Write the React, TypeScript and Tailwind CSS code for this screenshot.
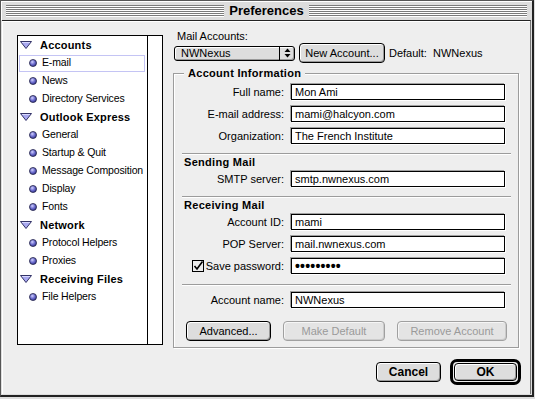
import React from 'react';

const sidebar = [
  { type: 'head', label: 'Accounts' },
  { type: 'item', label: 'E-mail', selected: true },
  { type: 'item', label: 'News' },
  { type: 'item', label: 'Directory Services' },
  { type: 'head', label: 'Outlook Express' },
  { type: 'item', label: 'General' },
  { type: 'item', label: 'Startup & Quit' },
  { type: 'item', label: 'Message Composition' },
  { type: 'item', label: 'Display' },
  { type: 'item', label: 'Fonts' },
  { type: 'head', label: 'Network' },
  { type: 'item', label: 'Protocol Helpers' },
  { type: 'item', label: 'Proxies' },
  { type: 'head', label: 'Receiving Files' },
  { type: 'item', label: 'File Helpers' },
];

function Triangle() {
  return (
    <svg width="12" height="8" viewBox="0 0 12 8" className="shrink-0">
      <polygon points="0.5,0.5 11.5,0.5 6,7.5" fill="#a8a8f0" stroke="#333366" strokeWidth="1" />
      <line x1="2" y1="1.5" x2="10" y2="1.5" stroke="#d8d8ff" />
    </svg>
  );
}

function Bullet() {
  return (
    <svg width="8" height="8" viewBox="0 0 8 8" className="shrink-0">
      <defs>
        <radialGradient id="bg" cx="0.4" cy="0.35" r="0.7">
          <stop offset="0" stopColor="#d0d0ff" />
          <stop offset="0.5" stopColor="#7070d0" />
          <stop offset="1" stopColor="#303090" />
        </radialGradient>
      </defs>
      <circle cx="4" cy="4" r="3.5" fill="url(#bg)" stroke="#222244" strokeWidth="0.8" />
    </svg>
  );
}

function Stripes({ className }: { className?: string }) {
  return (
    <div className={`flex flex-col ${className ?? ''}`}>
      {[0, 1, 2, 3, 4, 5].map((i) => (
        <div key={i} className="h-[2px] border-t border-[#7b7b7b] bg-white" />
      ))}
    </div>
  );
}

function Field({ label, value, checkbox, mask }: { label: string; value: string; checkbox?: boolean; mask?: boolean }) {
  return (
    <div className="flex items-center h-[16px]">
      <div className="w-[109px] flex items-center justify-end pr-[7px] text-[11px] text-black whitespace-nowrap">
        {checkbox && (
          <svg width="12" height="12" viewBox="0 0 12 12" className="mr-[2px] shrink-0">
            <rect x="0.5" y="0.5" width="11" height="11" fill="#eeeeee" stroke="#000" />
            <path d="M2.5 6 L5 9 L10.5 1.5" fill="none" stroke="#000" strokeWidth="1.6" />
          </svg>
        )}
        <span>{label}</span>
      </div>
      <div
        className={`w-[214px] h-[16px] border border-black bg-white shadow-[-1px_-1px_0_#a0a0a0,1px_1px_0_#fff] flex items-center px-[3px] text-black leading-none whitespace-nowrap ${
          mask ? 'text-[14px] font-bold tracking-[0.2px]' : 'text-[11px]'
        }`}
      >
        {value}
      </div>
    </div>
  );
}

function Separator({ className }: { className?: string }) {
  return <div className={`h-[2px] border-t border-[#9c9c9c] bg-white mr-[7px] ${className ?? ''}`} />;
}

const btn =
  'h-[20px] rounded-[4px] border border-black bg-[#dddddd] shadow-[inset_1px_1px_0_#ffffff,inset_-1px_-1px_0_#999999] text-[11px] text-black flex items-center justify-center whitespace-nowrap';
const btnDisabled =
  'h-[20px] rounded-[4px] border border-[#a0a0a0] bg-[#e4e4e4] shadow-[inset_1px_1px_0_#f6f6f6,inset_-1px_-1px_0_#cccccc] text-[11px] text-[#9a9a9a] flex items-center justify-center whitespace-nowrap';

export default function App() {
  return (
    <div className="w-[535px] h-[399px] bg-[#dddddd] font-['Liberation_Sans',Arial,sans-serif] select-none">
      <div className="w-[534px] h-[397px] flex flex-col border border-[#555] border-r-[2px] border-r-[#222] border-b-[2px] border-b-[#222] bg-[#dddddd]">
        {/* title bar */}
        <div className="h-[19px] flex items-center px-[5px] shadow-[inset_1px_1px_0_#fff]">
          <Stripes className="flex-1" />
          <div className="px-[5px] text-[13px] font-bold text-black leading-none">Preferences</div>
          <Stripes className="flex-1" />
        </div>
        {/* content */}
        <div className="flex-1 flex flex-col border-t border-[#222] bg-[#eeeeee] shadow-[inset_1px_1px_0_#fff] mx-[1px] mb-[1px] border-r border-r-[#777]">
          <div className="flex">
            {/* sidebar */}
            <div className="ml-[15px] mt-[14px] w-[146px] h-[310px] border border-black bg-white flex">
              <div className="w-[130px] border-r border-black flex flex-col overflow-hidden">
                {sidebar.map((s) =>
                  s.type === 'head' ? (
                    <div key={s.label} className="h-[18px] flex items-center pl-[2px] gap-[8px]">
                      <Triangle />
                      <span className="text-[11px] font-bold text-black tracking-[0.2px] whitespace-nowrap">{s.label}</span>
                    </div>
                  ) : (
                    <div key={s.label} className="h-[18px] flex items-center pl-[1px] pr-[2px]">
                      <div
                        className={`flex-1 h-[17px] flex items-center pl-[9px] gap-[5px] border ${
                          s.selected ? 'border-[#c4c4f4]' : 'border-transparent'
                        }`}
                      >
                        <Bullet />
                        <span className="text-[10.5px] tracking-[-0.15px] text-black whitespace-nowrap">{s.label}</span>
                      </div>
                    </div>
                  )
                )}
              </div>
            </div>

            {/* right panel */}
            <div className="ml-[10px] flex flex-col">
              <div className="mt-[9px] ml-[4px] text-[11px] text-black leading-[13px]">Mail Accounts:</div>
              <div className="mt-0 flex items-center">
                <div className="w-[121px] h-[15px] rounded-[3px] border border-black bg-[#dddddd] shadow-[inset_1px_1px_0_#fff,inset_-1px_-1px_0_#999] flex items-center ml-[1px]">
                  <span className="flex-1 pl-[6px] text-[11px] text-black leading-none">NWNexus</span>
                  <div className="w-[15px] h-full border-l border-black flex items-center justify-center">
                    <svg width="7" height="10" viewBox="0 0 7 10">
                      <polygon points="3.5,0.5 6.5,4 0.5,4" fill="#000" />
                      <polygon points="0.5,6 6.5,6 3.5,9.5" fill="#000" />
                    </svg>
                  </div>
                </div>
                <div className={`${btn} ml-[4px] w-[86px] h-[17px]`}>New Account...</div>
                <div className="ml-[4px] text-[11px] text-black">Default:&nbsp; NWNexus</div>
              </div>

              {/* group box */}
              <div className="relative mt-[10px] w-[346px] border border-[#9c9c9c] shadow-[inset_1px_1px_0_#fff,1px_1px_0_#fff] pl-[8px] pt-[10px] pb-[6px]">
                <div className="absolute -top-[7px] left-[10px] px-[4px] bg-[#eeeeee] text-[11px] font-bold text-black leading-[13px] tracking-[0.3px]">
                  Account Information
                </div>
                <div className="flex flex-col gap-[6px]">
                  <Field label="Full name:" value="Mon Ami" />
                  <Field label="E-mail address:" value="mami@halcyon.com" />
                  <Field label="Organization:" value="The French Institute" />
                </div>
                <Separator className="mt-[9px]" />
                <div className="mt-[1px] ml-[2px] text-[11px] font-bold text-black leading-[13px] tracking-[0.3px]">Sending Mail</div>
                <div className="mt-[2px]">
                  <Field label="SMTP server:" value="smtp.nwnexus.com" />
                </div>
                <Separator className="mt-[9px]" />
                <div className="mt-[1px] ml-[2px] text-[11px] font-bold text-black leading-[13px] tracking-[0.3px]">Receiving Mail</div>
                <div className="mt-[2px] flex flex-col gap-[6px]">
                  <Field label="Account ID:" value="mami" />
                  <Field label="POP Server:" value="mail.nwnexus.com" />
                  <Field label="Save password:" value="•••••••••" checkbox mask />
                </div>
                <Separator className="mt-[10px]" />
                <div className="mt-[6px]">
                  <Field label="Account name:" value="NWNexus" />
                </div>
                <div className="mt-[13px] flex items-center">
                  <div className={`${btn} ml-[4px] w-[85px]`}>Advanced...</div>
                  <div className={`${btnDisabled} ml-[12px] w-[102px]`}>Make Default</div>
                  <div className={`${btnDisabled} ml-[12px] w-[110px]`}>Remove Account</div>
                </div>
              </div>
            </div>
          </div>

          {/* bottom buttons */}
          <div className="mt-[11px] flex items-center justify-end pr-[9px]">
            <div className={`${btn} w-[65px] text-[12px] font-bold`}>Cancel</div>
            <div className="ml-[9px] w-[71px] h-[26px] rounded-[7px] border-[3px] border-black p-[1px]">
              <div className={`${btn} h-full text-[12px] font-bold`}>OK</div>
            </div>
          </div>
        </div>
      </div>
    </div>
  );
}
